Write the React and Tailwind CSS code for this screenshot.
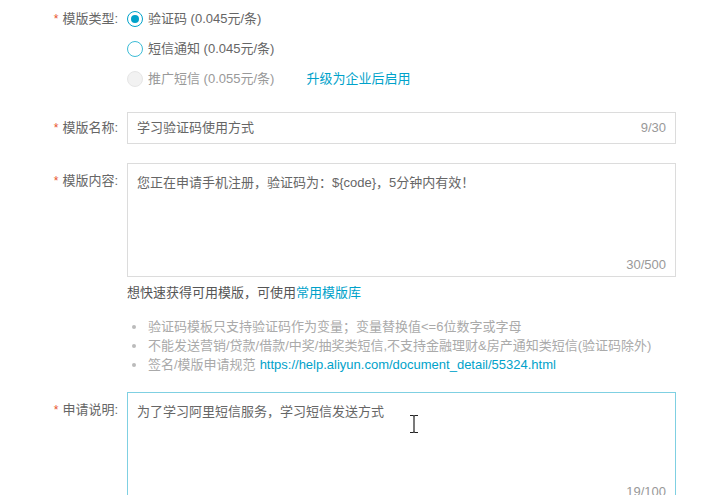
import React from "react";

const font = { fontFamily: '"Liberation Sans", "Noto Sans CJK SC", sans-serif' };

function Label({ children }) {
  return (
    <div className="w-[118px] shrink-0 flex justify-end items-center h-[30px] text-[13px] text-[#666]">
      <span className="text-[#e8552f] mr-[4px] text-[12px]">*</span>
      <span>{children}</span>
    </div>
  );
}

function Radio({ state, children, extra }) {
  return (
    <div className="h-[30px] flex items-center text-[13px]">
      {state === "checked" && (
        <span className="w-[16px] h-[16px] rounded-full border-[1.5px] border-[#00a2ca] flex items-center justify-center bg-white">
          <span className="w-[8px] h-[8px] rounded-full bg-[#00a2ca]" />
        </span>
      )}
      {state === "empty" && (
        <span className="w-[16px] h-[16px] rounded-full border-[1.5px] border-[#3cbcd6] bg-white" />
      )}
      {state === "disabled" && (
        <span className="w-[16px] h-[16px] rounded-full border border-[#e6e6e6] bg-[#f2f2f2]" />
      )}
      <span className={"ml-[5px] " + (state === "disabled" ? "text-[#999]" : "text-[#666]")}>{children}</span>
      {extra}
    </div>
  );
}

export default function App() {
  return (
    <div className="w-[724px] h-[495px] bg-white overflow-hidden relative" style={font}>
      <div className="pl-[0px] pt-[4px]">
        {/* 模版类型 */}
        <div className="flex">
          <Label>模版类型:</Label>
          <div className="ml-[9px]">
            <Radio state="checked">验证码 (0.045元/条)</Radio>
            <Radio state="empty">短信通知 (0.045元/条)</Radio>
            <Radio
              state="disabled"
              extra={<span className="ml-[32px] text-[#00a2ca]">升级为企业后启用</span>}
            >
              推广短信 (0.055元/条)
            </Radio>
          </div>
        </div>

        {/* 模版名称 */}
        <div className="flex mt-[18px] items-center">
          <Label>模版名称:</Label>
          <div className="ml-[9px] w-[549px] h-[32px] border border-[#dcdcdc] flex items-center justify-between px-[9px] text-[13px]">
            <span className="text-[#666]">学习验证码使用方式</span>
            <span className="text-[#999]">9/30</span>
          </div>
        </div>

        {/* 模版内容 */}
        <div className="flex mt-[19px]">
          <div className="pt-[3px]">
            <Label>模版内容:</Label>
          </div>
          <div className="ml-[9px] w-[549px]">
            <div className="h-[114px] border border-[#dcdcdc] flex flex-col px-[9px] pt-[9px] pb-[2px] text-[13px]">
              <span className="text-[#666]">您正在申请手机注册，验证码为：${"{code}"}，5分钟内有效！</span>
              <span className="mt-auto self-end text-[#999]">30/500</span>
            </div>
            <div className="mt-[6px] h-[20px] flex items-center text-[13px] text-[#555]">
              想快速获得可用模版，可使用<span className="text-[#00a2ca]">常用模版库</span>
            </div>
            <ul className="mt-[14px] text-[13px] text-[#aaa]">
              <li className="h-[19px] flex items-center">
                <span className="w-[4px] h-[4px] rounded-full bg-[#bbb] ml-[5px] mr-[12px]" />
                验证码模板只支持验证码作为变量；变量替换值&lt;=6位数字或字母
              </li>
              <li className="h-[19px] flex items-center">
                <span className="w-[4px] h-[4px] rounded-full bg-[#bbb] ml-[5px] mr-[12px]" />
                不能发送营销/贷款/借款/中奖/抽奖类短信,不支持金融理财&amp;房产通知类短信(验证码除外)
              </li>
              <li className="h-[19px] flex items-center">
                <span className="w-[4px] h-[4px] rounded-full bg-[#bbb] ml-[5px] mr-[12px]" />
                签名/模版申请规范
                <span className="ml-[4px] text-[#00a2ca]">https://help.aliyun.com/document_detail/55324.html</span>
              </li>
            </ul>
          </div>
        </div>

        {/* 申请说明 */}
        <div className="flex mt-[18px]">
          <div className="pt-[3px]">
            <Label>申请说明:</Label>
          </div>
          <div className="ml-[9px] w-[549px] h-[112px] border border-[#7fd0e2] flex flex-col px-[9px] pt-[9px] pb-[2px] text-[13px]">
            <span className="text-[#666]">为了学习阿里短信服务，学习短信发送方式</span>
            <span className="mt-auto self-end text-[#999]">19/100</span>
          </div>
        </div>
      </div>

      {/* text cursor */}
      <svg className="absolute left-[409px] top-[414px]" width="10" height="20" viewBox="0 0 10 20">
        <path d="M1 1.5 H4 Q5 1.5 5 3 V17 Q5 18.5 4 18.5 H1 M9 1.5 H6 Q5 1.5 5 3 M5 17 Q5 18.5 6 18.5 H9" fill="none" stroke="#222" strokeWidth="1.2" />
      </svg>
    </div>
  );
}
